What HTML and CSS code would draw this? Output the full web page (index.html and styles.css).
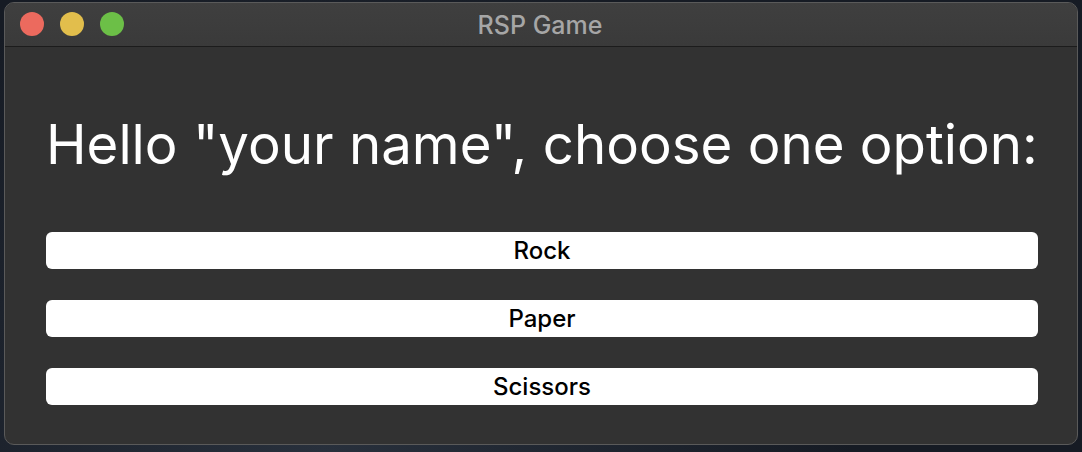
FILE: index.html
```html
<!DOCTYPE html>
<html>
<head>
<meta charset="utf-8">
<link rel="stylesheet" href="styles.css">
</head>
<body>
<div class="desktop">
  <div class="window">
    <div class="titlebar">
      <div class="lights">
        <span class="light red"></span>
        <span class="light yellow"></span>
        <span class="light green"></span>
      </div>
      <div class="title">RSP Game</div>
    </div>
    <div class="content">
      <h1 class="heading">Hello "your name", choose one option:</h1>
      <div class="buttons">
        <button class="btn">Rock</button>
        <button class="btn">Paper</button>
        <button class="btn">Scissors</button>
      </div>
    </div>
  </div>
</div>
</body>
</html>
```
FILE: styles.css
```css
html, body {
  margin: 0;
  padding: 0;
  width: 1082px;
  height: 452px;
  overflow: hidden;
  background: #1b222d;
}
.desktop {
  width: 1082px;
  height: 452px;
  padding: 2px 4px 0 4px;
  box-sizing: border-box;
  background: radial-gradient(circle at 30% 100%, #28303c 0%, #161b24 60%), #1b222d;
}
.window {
  width: 1074px;
  height: 443px;
  border-radius: 10px;
  background: #323232;
  border: 1px solid #5a5a5a;
  box-sizing: border-box;
  overflow: hidden;
  display: flex;
  flex-direction: column;
  font-family: Inter, "Liberation Sans", sans-serif;
}
.titlebar {
  height: 43px;
  flex: none;
  background: linear-gradient(#3f3f3f, #3a3a3a);
  border-bottom: 1px solid #1c1c1c;
  position: relative;
  display: flex;
  align-items: center;
  justify-content: center;
}
.lights {
  position: absolute;
  left: 15px;
  top: 9px;
  display: flex;
  gap: 16px;
}
.light {
  width: 24px;
  height: 24px;
  border-radius: 50%;
  display: block;
}
.red { background: #ec6a5e; }
.yellow { background: #e2be4c; }
.green { background: #6cbf47; }
.title {
  color: #a6a6a6;
  font-size: 25px;
  font-weight: 500;
  margin-right: 2px;
}
.content {
  flex: 1;
  padding: 64px 39px 0 41px;
}
.heading {
  margin: 0;
  color: #ffffff;
  font-weight: 400;
  font-size: 54.6px;
  line-height: 66px;
  text-align: center;
  white-space: nowrap;
  padding-right: 19px;
}
.buttons {
  margin-top: 55px;
  display: flex;
  flex-direction: column;
  gap: 31px;
}
.btn {
  height: 37px;
  background: #ffffff;
  border: none;
  border-radius: 6px;
  color: #000;
  font-family: Inter, "Liberation Sans", sans-serif;
  font-size: 24px;
  font-weight: 500;
  padding: 0;
}
```
